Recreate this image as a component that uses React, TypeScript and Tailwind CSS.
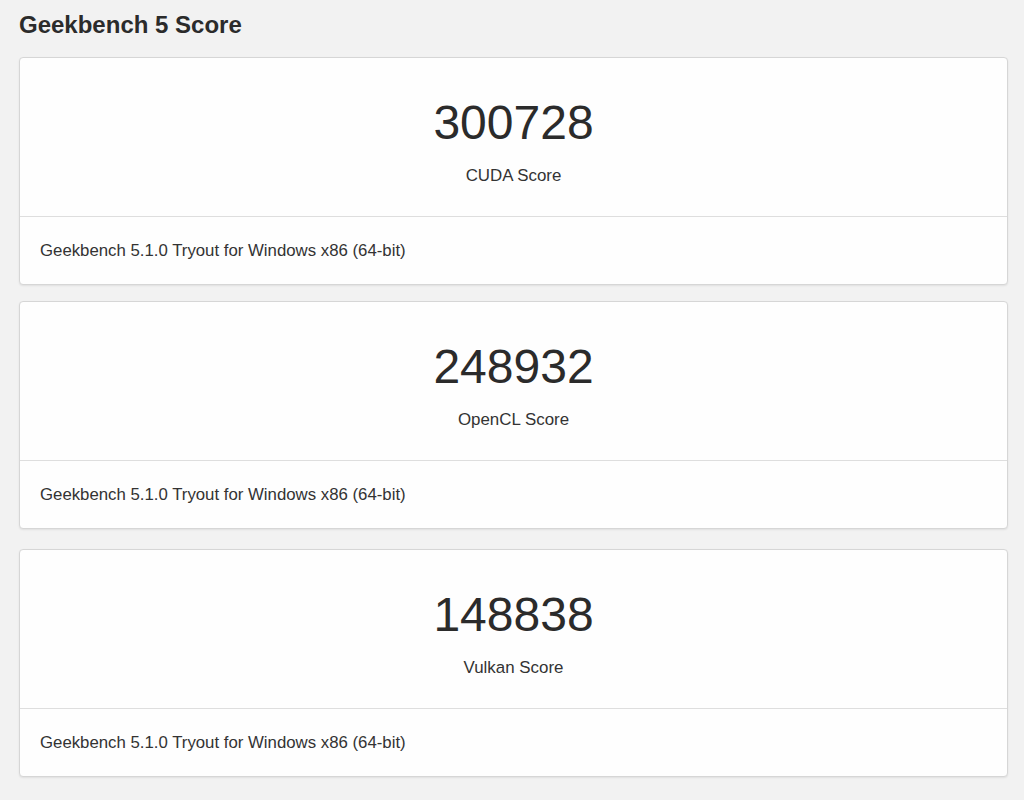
import React from 'react'

interface Score {
  value: string
  label: string
  gap: string
}

const scores: Score[] = [
  { value: '300728', label: 'CUDA Score', gap: 'mt-0' },
  { value: '248932', label: 'OpenCL Score', gap: 'mt-4' },
  { value: '148838', label: 'Vulkan Score', gap: 'mt-5' },
]

const version = 'Geekbench 5.1.0 Tryout for Windows x86 (64-bit)'

function ScoreCard({ score }: { score: Score }) {
  return (
    <div
      className={`${score.gap} rounded border border-[#d6d6d6] bg-[#fefefe] shadow-[0_1px_2px_rgba(0,0,0,0.08)]`}
    >
      {/* 점수 영역 */}
      <div className="h-[158px] pt-[36px] text-center">
        <div className="text-[48px] leading-[58px] text-[#2b2b2b]">{score.value}</div>
        <div className="mt-3 text-[16.9px] leading-6 text-[#333]">{score.label}</div>
      </div>
      <div className="h-px bg-[#dedede]" />
      {/* 버전 */}
      <div className="flex h-[67px] items-center px-5 text-[16.8px] leading-6 text-[#333]">
        {version}
      </div>
    </div>
  )
}

export default function App() {
  return (
    <div
      className="min-h-[800px] bg-[#f2f2f2] pl-[19px] pr-[16px] pt-3"
      style={{ fontFamily: '"Liberation Sans", Arial, sans-serif' }}
    >
      <h1 className="mb-[19px] text-[24px] font-bold leading-[26px] text-[#2b2b2b]">
        Geekbench 5 Score
      </h1>
      {scores.map(s => (
        <ScoreCard key={s.label} score={s} />
      ))}
    </div>
  )
}
